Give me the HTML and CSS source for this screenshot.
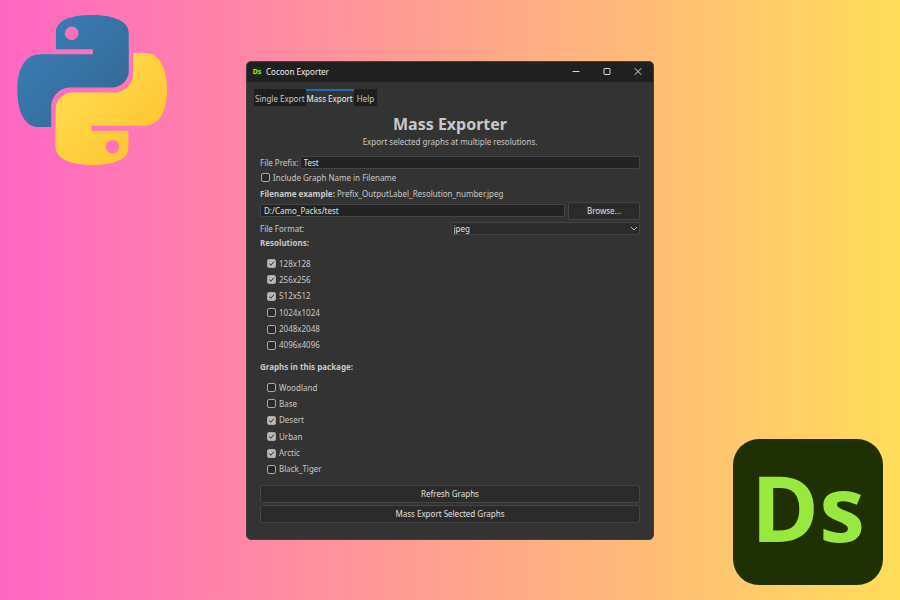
FILE: index.html
```html
<!DOCTYPE html>
<html lang="en">
<head>
<meta charset="utf-8">
<title>Cocoon Exporter</title>
<link rel="stylesheet" href="styles.css">
</head>
<body>
<div class="python-logo">
  <svg viewBox="51 44 451 451" role="img" aria-label="Python">
    <defs>
      <linearGradient id="blue" x1="0" y1="0" x2="1" y2="1"><stop offset=".1" stop-color="#387eb8"/><stop offset=".85" stop-color="#366994"/></linearGradient>
      <linearGradient id="yellow" x1="1" y1="1" x2="0" y2="0"><stop offset=".1" stop-color="#ffe052"/><stop offset=".85" stop-color="#ffc331"/></linearGradient>
      <path id="snake" fill-rule="evenodd" d="M168 147V95C168 62 210 44 276 44C340 44 387 62 387 98V212C387 240 364 262 335 262H211C178 262 154 290 154 320V381H116C75 381 52 335 52 270C52 205 75 162 121 162H279V147ZM236 99a20.500 20.500 0 1 0-41 0a20.500 20.500 0 1 0 41 0Z"/>
    </defs>
    <use href="#snake" fill="url(#blue)"/>
    <use href="#snake" fill="url(#yellow)" transform="rotate(180 277 269.500)"/>
  </svg>
</div>

<main class="window">
  <header class="titlebar">
    <span class="app-icon">Ds</span>
    <span class="app-name">Cocoon Exporter</span>
    <button class="win-btn" aria-label="Minimize"><svg viewBox="0 0 8 8"><path d="M.5 3.500h7"/></svg></button>
    <button class="win-btn" aria-label="Maximize"><svg viewBox="0 0 8 8"><rect x="1" y=".5" width="6" height="6" rx=".5"/></svg></button>
    <button class="win-btn" aria-label="Close"><svg viewBox="0 0 8 8"><path d="M.7.2l6.600 6.600M7.300.2L.7 6.800"/></svg></button>
  </header>

  <div class="content">
    <nav class="tabs">
      <button class="tab">Single Export</button>
      <button class="tab active">Mass Export</button>
      <button class="tab">Help</button>
    </nav>

    <form class="panel">
      <h1>Mass Exporter</h1>
      <p class="subtitle">Export selected graphs at multiple resolutions.</p>

      <div class="row">
        <label for="prefix">File Prefix:</label>
        <input class="field" id="prefix" type="text" value="Test">
      </div>
      <label class="check include"><input type="checkbox">Include Graph Name in Filename</label>
      <p class="line"><strong>Filename example:</strong> Prefix_OutputLabel_Resolution_number.jpeg</p>
      <div class="row path">
        <input class="field" type="text" value="D:/Camo_Packs/test" aria-label="Output folder">
        <button class="btn browse" type="button">Browse...</button>
      </div>
      <div class="row format">
        <label for="format">File Format:</label>
        <div class="select-wrap">
          <select id="format"><option>jpeg</option></select>
          <svg viewBox="0 0 8 5"><path d="M1 1l3 3l3-3"/></svg>
        </div>
      </div>

      <h2>Resolutions:</h2>
      <div class="checks">
        <label class="check"><input type="checkbox" checked>128x128</label>
        <label class="check"><input type="checkbox" checked>256x256</label>
        <label class="check"><input type="checkbox" checked>512x512</label>
        <label class="check"><input type="checkbox">1024x1024</label>
        <label class="check"><input type="checkbox">2048x2048</label>
        <label class="check"><input type="checkbox">4096x4096</label>
      </div>

      <h2>Graphs in this package:</h2>
      <div class="checks">
        <label class="check"><input type="checkbox">Woodland</label>
        <label class="check"><input type="checkbox">Base</label>
        <label class="check"><input type="checkbox" checked>Desert</label>
        <label class="check"><input type="checkbox" checked>Urban</label>
        <label class="check"><input type="checkbox" checked>Arctic</label>
        <label class="check"><input type="checkbox">Black_Tiger</label>
      </div>

      <div class="actions">
        <button class="btn" type="button">Refresh Graphs</button>
        <button class="btn" type="button">Mass Export Selected Graphs</button>
      </div>
    </form>
  </div>
</main>

<div class="designer-logo">Ds</div>
</body>
</html>
```
FILE: styles.css
```css
* {
  box-sizing: border-box;
}

body {
  margin: 0;
  min-height: 100vh;
  display: grid;
  grid-template-columns: 41fr 68fr 41fr;
  align-items: center;
  background: linear-gradient(90deg, #ff66c4, #ffde59);
  color: #c8c8c8;
  font: 8px/16px "Noto Sans", "Open Sans", sans-serif;
}

button,
input,
select {
  font: inherit;
  color: inherit;
}

.python-logo {
  align-self: start;
  padding: 15px 17px;
}

.python-logo svg {
  display: block;
  width: 150px;
  height: 150px;
}

.designer-logo {
  align-self: end;
  justify-self: end;
  width: 150px;
  margin: 15px 17px;
  padding-bottom: 10px;
  border-radius: 26px;
  background: #1f3003;
  color: #99e83f;
  font: bold 92px/136px "Open Sans", sans-serif;
  text-align: center;
}

.window {
  border: 1px solid #3f3f3f;
  border-radius: 5px;
  background: #333;
  overflow: hidden;
}

.titlebar {
  display: flex;
  align-items: center;
  height: 20px;
  padding-left: 5px;
  background: #202020;
  color: #f0f0f0;
}

.app-icon {
  width: 10px;
  border-radius: 2px;
  background: #1f3003;
  color: #99e83f;
  font-weight: bold;
  font-size: 7px;
  line-height: 9px;
  text-align: center;
}

.app-name {
  flex: 1;
  margin-left: 4px;
}

.win-btn {
  display: flex;
  justify-content: center;
  width: 31px;
  padding: 0;
  border: 0;
  background: none;
}

.win-btn svg {
  width: 8px;
  height: 8px;
  fill: none;
  stroke: #ddd;
}

.content {
  padding: 7px 13px 16px;
}

.tabs {
  display: flex;
  margin: 0 -6px;
}

.tab {
  height: 17px;
  padding: 0 1px;
  border: 0;
  border-top: 2px solid #1e1e1e;
  background: #1e1e1e;
  line-height: 15px;
}

.tab:last-child {
  padding: 0 3px;
}

.tab.active {
  border-color: #1c6db5;
  background: #333;
  color: #f0f0f0;
}

h1 {
  margin: 8px 0 0;
  font-size: 16px;
  line-height: 20px;
  text-align: center;
}

.subtitle,
.line {
  margin: 0;
}

.subtitle {
  text-align: center;
}

.row {
  display: flex;
  align-items: center;
  gap: 1px;
  margin-top: 6px;
  line-height: 13px;
}

.field,
select {
  flex: 1;
  min-width: 0;
  height: 13px;
  padding: 0 3px;
  border: 1px solid #444;
  border-radius: 2px;
  background: #232323;
  color: #e0e0e0;
  line-height: 11px;
}

.check {
  display: flex;
  align-items: center;
  gap: 3px;
}

.include {
  margin-top: 1px;
  padding-left: 1px;
}

.check input {
  appearance: none;
  width: 9px;
  height: 9px;
  margin: 0;
  border: 1px solid #a8a8a8;
  border-radius: 2px;
  background: #292929;
}

.check input:checked {
  background: #b8b8b8 url("data:image/svg+xml,%3Csvg xmlns='http://www.w3.org/2000/svg' viewBox='0 0 7 7'%3E%3Cpath d='M1.200 3.600l1.600 1.600l3-3.400' fill='none' stroke='%23222'/%3E%3C/svg%3E");
}

.path {
  gap: 3px;
  margin-top: 0;
}

.btn {
  height: 18px;
  padding: 0;
  border: 1px solid #444;
  border-radius: 2px;
  background: #2b2b2b;
  color: #e0e0e0;
  line-height: 16px;
}

.browse {
  width: 72px;
}

.format {
  margin-top: 2px;
}

.format label {
  flex: 1;
}

.select-wrap {
  display: flex;
  flex: 1;
  align-items: center;
}

select {
  appearance: none;
  padding: 0 2px;
  background: #2b2b2b;
}

.select-wrap svg {
  width: 8px;
  height: 5px;
  margin-left: -10px;
  margin-right: 2px;
  fill: none;
  stroke: #bbb;
  pointer-events: none;
}

h2 {
  margin: 0 0 5px;
  font-size: 8px;
  line-height: 16px;
}

.checks {
  display: flex;
  flex-direction: column;
  justify-content: space-between;
  height: 98px;
  margin-bottom: 5px;
  padding-left: 7px;
}

.actions {
  display: grid;
  gap: 2px;
  margin-top: 7px;
}
```
